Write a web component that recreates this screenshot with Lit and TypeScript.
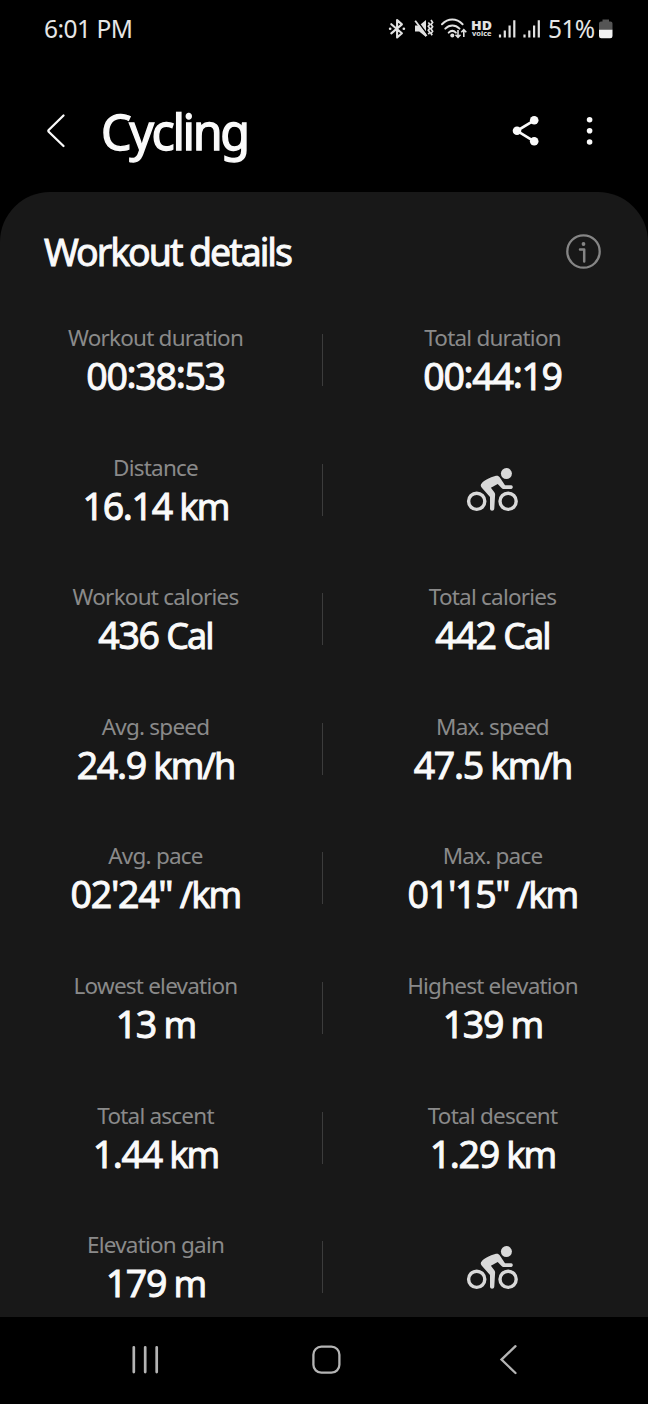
import { LitElement, html, css, svg } from "lit";
import { customElement, property } from "lit/decorators.js";

interface Metric {
  label: string;
  value: string;
  unit?: string;
}

const ROWS: [Metric, Metric | null][] = [
  [{ label: "Workout duration", value: "00:38:53" }, { label: "Total duration", value: "00:44:19" }],
  [{ label: "Distance", value: "16.14", unit: " km" }, null],
  [{ label: "Workout calories", value: "436", unit: " Cal" }, { label: "Total calories", value: "442", unit: " Cal" }],
  [{ label: "Avg. speed", value: "24.9", unit: " km/h" }, { label: "Max. speed", value: "47.5", unit: " km/h" }],
  [{ label: "Avg. pace", value: "02'24\"", unit: " /km" }, { label: "Max. pace", value: "01'15\"", unit: " /km" }],
  [{ label: "Lowest elevation", value: "13", unit: " m" }, { label: "Highest elevation", value: "139", unit: " m" }],
  [{ label: "Total ascent", value: "1.44", unit: " km" }, { label: "Total descent", value: "1.29", unit: " km" }],
  [{ label: "Elevation gain", value: "179", unit: " m" }, null],
];

@customElement("status-bar")
class StatusBar extends LitElement {
  static styles = css`
    :host {
      display: flex;
      justify-content: space-between;
      height: 58px;
      padding: 0 35px 0 44px;
      color: #e6e6e6;
      font-size: 24.5px;
      line-height: 58px;
    }
    .time { letter-spacing: -0.5px; }
    .tray { display: flex; }
    .icons { width: 160px; height: 58px; }
    .percent { width: 51px; letter-spacing: -0.6px; }
    .battery { width: 14px; height: 58px; }
    .hd { font: 800 12.5px "Open Sans", "Noto Sans", sans-serif; }
    .voice { font: 700 7.6px "Noto Sans", sans-serif; }
  `;

  private bars(x: number) {
    return svg`<path d="M${x} 34.500v3M${x + 4.8} 30.500v7M${x + 9.600} 25.500v12M${x + 14.300} 20.300v17.200" stroke="#e2e2e2" stroke-width="2.200"/>`;
  }

  render() {
    return html`
      <span class="time">6:01 PM</span>
      <div class="tray">
        <svg class="icons" viewBox="387 0 160 58" fill="none">
          <g stroke="#e2e2e2" stroke-width="2.100" stroke-linejoin="round" stroke-linecap="round">
            <path d="M390.300 24.200l10.600 9-4.800 4.300v-17.400l4.800 4.300-10.600 9"/>
            <path d="M389.100 28.800h.1M402.800 28.800h.1" stroke-width="2.600"/>
          </g>
          <path d="M414 25.500h4.200l6.800-5.500v17l-6.800-5.500H414z" fill="#e2e2e2"/>
          <path d="M415.800 20.200l10.400 14" stroke="#000" stroke-width="1.500"/>
          <path d="M414.200 20.800l11.400 15.200" stroke="#e2e2e2" stroke-width="1.900"/>
          <path d="M427.300 22.500l1.500 1.700-1.500 2 1.500 2-1.500 2 1.500 2-1.500 2M430 20l1.600 2.400-1.600 2.200 1.600 2.200-1.600 2.200 1.600 2.200-1.600 2.200 1.200 1.800" stroke="#e2e2e2" stroke-width="1.700"/>
          <g stroke="#e2e2e2" stroke-width="2" stroke-linecap="round">
            <path d="M441 24.200c6.200-6.200 14.400-6.200 20.600 0M444.300 28.600c4.200-4.200 10-4.200 14.200 0M447.700 32.600c2.200-2.100 5-2.100 7.200 0"/>
          </g>
          <circle cx="451.300" cy="35.500" r="2" fill="#e2e2e2"/>
          <path d="M457 30v7.200m-2.500-2.400l2.500 2.600 2.500-2.600M462.800 37v-7m-2.500 2.300l2.500-2.600 2.500 2.600" stroke="#e2e2e2" stroke-width="1.600"/>
          <text class="hd" x="470" y="30" fill="#e2e2e2" textLength="21" lengthAdjust="spacingAndGlyphs">HD</text>
          <text class="voice" x="471" y="36.300" fill="#e2e2e2" textLength="19.500" lengthAdjust="spacingAndGlyphs">voice</text>
          ${this.bars(499)} ${this.bars(523.5)}
        </svg>
        <span class="percent">51%</span>
        <svg class="battery" viewBox="599 0 14 58">
          <path d="M602.500 19.500h6.500v2h1.500a2 2 0 0 1 2 2V30h-13.500v-6.500a2 2 0 0 1 2-2h1.500z" fill="#555"/>
          <path d="M599 29.800h13.500v6.200a2.300 2.300 0 0 1-2.300 2.300h-8.900a2.300 2.300 0 0 1-2.300-2.300z" fill="#f2f2f2"/>
        </svg>
      </div>
    `;
  }
}

@customElement("title-bar")
class TitleBar extends LitElement {
  static styles = css`
    :host {
      display: flex;
      align-items: center;
      height: 134px;
      box-sizing: border-box;
      padding: 12px 48px 0 44px;
      color: #fafafa;
    }
    .back { width: 24px; height: 40px; }
    .title {
      flex: 1;
      margin: 0 0 0 33px;
      font-size: 48.5px;
      font-weight: 400;
      line-height: 66px;
      letter-spacing: -2.4px;
      -webkit-text-stroke: 1.3px #fafafa;
    }
    .share { width: 30px; height: 36px; margin-right: 39px; }
    .more { width: 20px; height: 36px; }
  `;

  render() {
    return html`
      <svg class="back" viewBox="44 111 24 40" fill="none" stroke="#fafafa" stroke-width="2.300" stroke-linecap="round" stroke-linejoin="round">
        <path d="M63.500 115.500L48.700 130 a1.200 1.200 0 0 0 0 1.700L63.500 146"/>
      </svg>
      <h1 class="title">Cycling</h1>
      <svg class="share" viewBox="511 113 30 36" fill="#fafafa">
        <path d="M534.200 120.300L517 130.800l17.200 10.500" fill="none" stroke="#fafafa" stroke-width="2.700"/>
        <circle cx="517" cy="130.800" r="4.300"/><circle cx="534.200" cy="120.300" r="4.300"/><circle cx="534.200" cy="141.300" r="4.300"/>
      </svg>
      <svg class="more" viewBox="580 113 20 36" fill="#fafafa">
        <circle cx="589.600" cy="119.700" r="2.800"/><circle cx="589.600" cy="130.800" r="2.800"/><circle cx="589.600" cy="142" r="2.800"/>
      </svg>
    `;
  }
}

@customElement("metric-cell")
class MetricCell extends LitElement {
  @property({ attribute: false }) metric: Metric | null = null;

  static styles = css`
    :host { display: flex; flex-direction: column; align-items: center; white-space: pre; }
    .label { color: #8a8a8a; font-size: 22.5px; line-height: 32px; letter-spacing: -0.78px; }
    .value { color: #fafafa; font-size: 37.5px; line-height: 43px; letter-spacing: -1.3px; -webkit-text-stroke: 0.9px #fafafa; }
    .colon { display: inline-block; height: 43px; vertical-align: 2.5px; margin: -2.5px 0 0; }
    .unit { font-size: 36px; letter-spacing: -1.9px; }
    .cyclist { width: 54px; height: 46px; margin-top: 15.4px; }
  `;

  render() {
    if (!this.metric) {
      return html`<svg class="cyclist" viewBox="466 467 54 46" fill="none">
        <circle cx="476.700" cy="501.300" r="8.100" stroke="#d9d9d9" stroke-width="3.400"/>
        <circle cx="508.100" cy="501.300" r="8.100" stroke="#d9d9d9" stroke-width="3.400"/>
        <circle cx="506.400" cy="473.600" r="5.500" fill="#d9d9d9"/>
        <path d="M481.800 483.300C483.500 481 489.500 477.500 496 475.800C497.700 475.400 498.800 476 499.700 477.200L505 485.200H511.200C513.300 485.200 513.300 489 511.200 489H504C502.900 489 502 488.500 501.300 487.700L497.700 483.900L490.900 487.700L494.300 492.300C494.900 493.100 495.200 493.900 495.100 495L494.300 508.500C494.100 511.400 490 511.400 490 508.500V497L481.800 487.700C480.300 486.200 480.500 484.700 481.800 483.300Z" fill="#d9d9d9"/>
      </svg>`;
    }
    const { label, value, unit = "" } = this.metric;
    const parts = value.split(":");
    return html`
      <span class="label">${label}</span>
      <span class="value">${parts.map((part, i) => (i ? html`<span class="colon">:</span>${part}` : part))}<span class="unit">${unit}</span></span>
    `;
  }
}

@customElement("nav-bar")
class NavBar extends LitElement {
  static styles = css`
    :host { display: flex; justify-content: space-between; align-items: center; height: 87px; box-sizing: border-box; padding: 0 129px 2px 130px; background: #000; }
    .icon { width: 32px; height: 32px; fill: none; stroke: #b4b4b4; stroke-width: 2.3; stroke-linecap: round; }
  `;

  render() {
    return html`
      <svg class="icon" viewBox="130 1344 32 32"><path d="M133.800 1347.300v24.800M145.200 1347.300v24.800M156.700 1347.300v24.800" stroke-width="2.700"/></svg>
      <svg class="icon" viewBox="309 1344 32 32"><rect x="313.400" y="1346.700" width="26" height="26" rx="8"/></svg>
      <svg class="icon" viewBox="487 1344 32 32"><path d="M515.500 1346.200L501.500 1359.600l14 13.400"/></svg>
    `;
  }
}

@customElement("app-root")
class AppRoot extends LitElement {
  static styles = css`
    :host {
      display: flex;
      flex-direction: column;
      width: 648px;
      height: 1404px;
      overflow: hidden;
      background: #000;
      font-family: "Noto Sans", sans-serif;
    }
    .panel {
      flex: 1;
      min-height: 0;
      overflow: hidden;
      background: #181818;
      border-radius: 50px 50px 0 0;
    }
    .heading {
      display: flex;
      align-items: center;
      justify-content: space-between;
      height: 120px;
      padding: 0 46px 0 44px;
    }
    .heading-text { margin: 0; color: #fafafa; font-size: 37.5px; font-weight: 400; line-height: 50px; letter-spacing: -2.05px; -webkit-text-stroke: 0.9px #fafafa; }
    .info { width: 37px; height: 37px; margin-bottom: 1px; }
    .rows { display: flex; flex-direction: column; padding-top: 10px; }
    .row { display: grid; grid-template-columns: 311px 26px 311px; height: 129.6px; flex: none; }
    .divider { width: 1.5px; height: 52px; margin: 12px 0 0 10.5px; background: #3c3c3c; }
  `;

  render() {
    return html`
      <status-bar></status-bar>
      <title-bar></title-bar>
      <main class="panel">
        <header class="heading">
          <h2 class="heading-text">Workout details</h2>
          <svg class="info" viewBox="565 233 37 37" fill="none" stroke="#858585">
            <circle cx="583.500" cy="251.500" r="16.200" stroke-width="2.300"/>
            <path d="M580 249.500h4.200v12" stroke-width="2.500" stroke-linecap="round" stroke-linejoin="round"/>
            <circle cx="583.500" cy="244" r="1.900" fill="#858585" stroke="none"/>
          </svg>
        </header>
        <section class="rows">
          ${ROWS.map(
            ([left, right]) => html`
              <div class="row">
                <metric-cell .metric=${left}></metric-cell>
                <i class="divider"></i>
                <metric-cell .metric=${right}></metric-cell>
              </div>
            `
          )}
        </section>
      </main>
      <nav-bar></nav-bar>
    `;
  }
}
